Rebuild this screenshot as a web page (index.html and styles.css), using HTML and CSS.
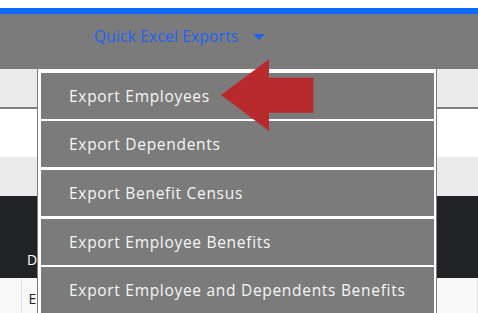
FILE: index.html
```html
<!DOCTYPE html>
<html lang="en">
<head>
  <meta charset="UTF-8">
  <title>Employees</title>
  <link rel="stylesheet" href="styles.css">
</head>
<body>
  <div class="page">
    <header class="topbar">
      <div class="accent"></div>
      <nav class="menu-bar">
        <a class="menu-toggle" href="#">Quick Excel Exports <span class="caret"></span></a>
      </nav>
    </header>

    <div class="content">
      <div class="tab-row"></div>
      <div class="blank-row"></div>
      <div class="filter-row"></div>
      <table class="grid">
        <colgroup>
          <col class="sel">
          <col class="name">
          <col>
        </colgroup>
        <thead>
          <tr>
            <th></th>
            <th>D</th>
            <th></th>
          </tr>
        </thead>
        <tbody>
          <tr>
            <td></td>
            <td>E</td>
            <td></td>
          </tr>
        </tbody>
      </table>
    </div>

    <!-- open export menu -->
    <ul class="dropdown">
      <li><a href="#">Export Employees</a></li>
      <li><a href="#">Export Dependents</a></li>
      <li><a href="#">Export Benefit Census</a></li>
      <li><a href="#">Export Employee Benefits</a></li>
      <li><a href="#">Export Employee and Dependents Benefits</a></li>
    </ul>

    <svg class="pointer" width="94" height="73" viewBox="0 0 94 73">
      <polygon points="1,36 49,0.3 49,18.7 93.3,18.7 93.3,53.7 49,53.7 49,72" fill="#b82a2b"/>
    </svg>
  </div>
</body>
</html>
```

FILE: styles.css
```css
body {
  margin: 0;
  font-family: 'Open Sans', 'Liberation Sans', sans-serif;
  background: #fff;
}
.page {
  position: relative;
  height: 313px;
  overflow: hidden;
  padding-top: 8px;
  box-sizing: border-box;
}
.accent {
  height: 6px;
  background: #0a6cff;
}
.menu-bar {
  height: 55px;
  background: #7b7b7b;
  padding-left: 94px;
  box-sizing: border-box;
}
.menu-toggle {
  display: inline-block;
  margin-top: 11px;
  color: #1f62f5;
  font-size: 15.5px;
  text-decoration: none;
  letter-spacing: 0.2px;
}
.caret {
  display: inline-block;
  width: 0;
  height: 0;
  margin-left: 10px;
  border-left: 6px solid transparent;
  border-right: 6px solid transparent;
  border-top: 6px solid #1f62f5;
  vertical-align: 2px;
}
.tab-row {
  height: 38px;
  background: #ebebeb;
  border-bottom: 2px solid #808080;
}
.blank-row {
  height: 48px;
  background: #fff;
}
.filter-row {
  height: 38.7px;
  background: #ebebeb;
}
.grid {
  width: 100%;
  table-layout: fixed;
  border-collapse: collapse;
  font-size: 14px;
}
.grid col.sel {
  width: 21px;
}
.grid col.name {
  width: 16px;
}
.grid th {
  height: 82.6px;
  background: #212327;
  color: #fff;
  text-align: left;
  vertical-align: bottom;
  font-weight: 400;
  padding: 0 0 9px 6px;
  box-sizing: border-box;
}
.grid td {
  height: 40px;
  background: #f8f8f8;
  color: #222;
  padding: 0 0 0 7px;
  border-right: 1px solid #e3e3e3;
}
.grid th:first-child,
.grid td:first-child {
  padding: 0;
}
.dropdown {
  position: absolute;
  left: 37px;
  top: 69px;
  width: 400px;
  margin: 0;
  padding: 3.5px 2px 0 3px;
  list-style: none;
  background: #fff;
  border-left: 1px solid #7b7b7b;
  border-right: 1px solid #7b7b7b;
  box-sizing: border-box;
  display: flex;
  flex-direction: column;
  gap: 2.6px;
}
.dropdown li a {
  display: flex;
  align-items: center;
  height: 46.1px;
  padding-left: 28px;
  background: #7b7b7b;
  color: #f6f6f6;
  font-size: 15.5px;
  font-weight: 500;
  text-decoration: none;
  letter-spacing: 0.7px;
}
.pointer {
  position: absolute;
  left: 220px;
  top: 59px;
}
```
